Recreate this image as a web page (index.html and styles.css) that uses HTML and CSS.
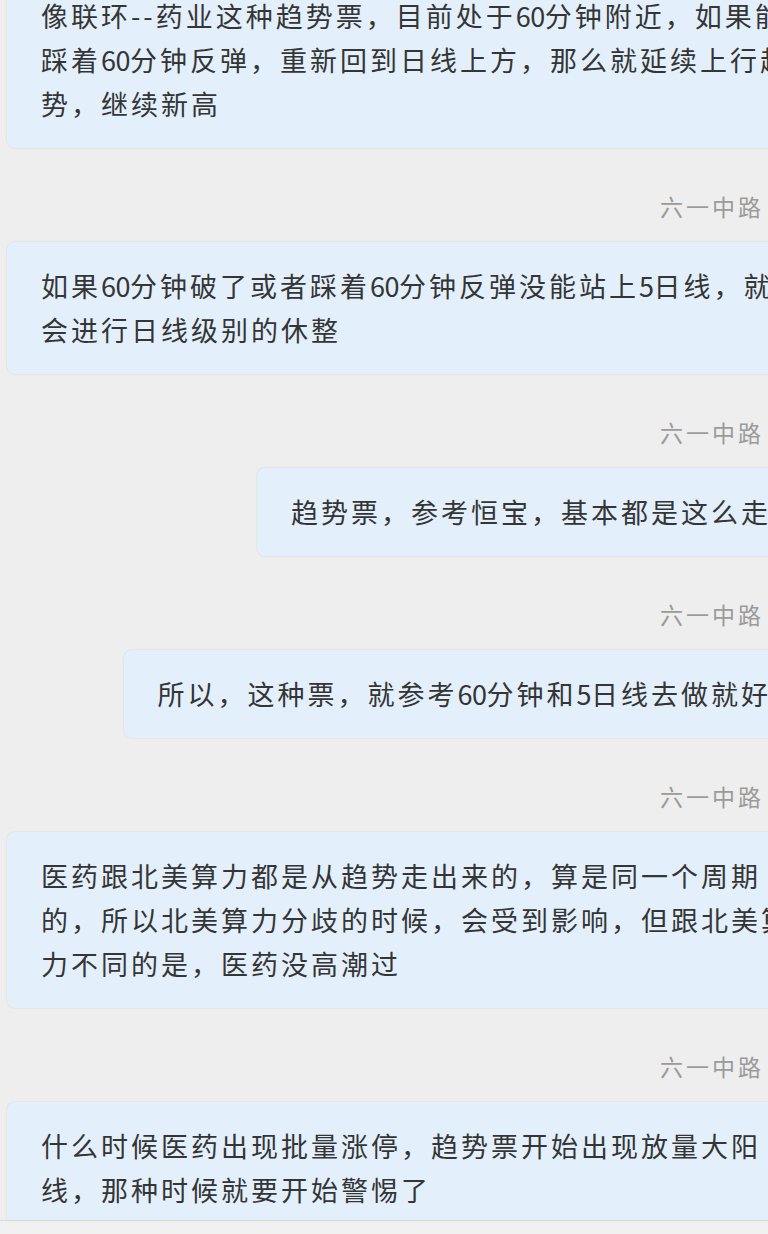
FILE: index.html
```html
<!DOCTYPE html>
<html lang="zh-CN">
<head>
<meta charset="utf-8">
<title>聊天记录</title>
<link rel="stylesheet" href="styles.css">
</head>
<body>
<main class="chat">
  <div class="list">
    <div class="bubble full">像联环--药业这种趋势票，目前处于<span class="num">60</span>分钟附近，如果能<br>踩着<span class="num">60</span>分钟反弹，重新回到日线上方，那么就延续上行趋<br>势，继续新高</div>

    <div class="sender"><span class="name">六一中路</span><span class="tag"></span></div>
    <div class="bubble full">如果<span class="num">60</span>分钟破了或者踩着<span class="num">60</span>分钟反弹没能站上<span class="num">5</span>日线，就<br>会进行日线级别的休整</div>

    <div class="sender"><span class="name">六一中路</span><span class="tag"></span></div>
    <div class="bubble">趋势票，参考恒宝，基本都是这么走的</div>

    <div class="sender"><span class="name">六一中路</span><span class="tag"></span></div>
    <div class="bubble">所以，这种票，就参考<span class="num">60</span>分钟和<span class="num">5</span>日线去做就好了</div>

    <div class="sender"><span class="name">六一中路</span><span class="tag"></span></div>
    <div class="bubble full">医药跟北美算力都是从趋势走出来的，算是同一个周期<br>的，所以北美算力分歧的时候，会受到影响，但跟北美算<br>力不同的是，医药没高潮过</div>

    <div class="sender"><span class="name">六一中路</span><span class="tag"></span></div>
    <div class="bubble full">什么时候医药出现批量涨停，趋势票开始出现放量大阳<br>线，那种时候就要开始警惕了</div>
  </div>
</main>
<footer class="footer"></footer>
</body>
</html>
```
FILE: styles.css
```css
html, body {
  margin: 0;
  padding: 0;
}

body {
  width: 768px;
  height: 1234px;
  overflow: hidden;
  background: #eeeeee;
  display: flex;
  flex-direction: column;
  font-family: "Noto Sans CJK SC", "Noto Sans", sans-serif;
  color: #333333;
}

.chat {
  flex: 1;
  min-height: 0;
  overflow: hidden;
  padding-left: 7px;
}

.list {
  width: 828px;
  margin-top: -28px;
  display: flex;
  flex-direction: column;
}

.bubble {
  align-self: flex-end;
  box-sizing: border-box;
  padding: 22px 34px;
  background: #e3f0fb;
  border-radius: 8px;
  box-shadow: 0 0 2px rgba(0, 0, 0, 0.12);
  font-size: 27px;
  line-height: 44px;
  letter-spacing: 3px;
  white-space: nowrap;
  color: #353535;
}

.bubble.full {
  align-self: stretch;
}

.num {
  letter-spacing: -0.5px;
}

.sender {
  display: flex;
  justify-content: flex-end;
  align-items: center;
  height: 36px;
  margin: 40px 0 18px;
  padding-right: 46px;
}

.name {
  font-size: 23px;
  line-height: 36px;
  letter-spacing: 3px;
  color: #9b9b9b;
}

.tag {
  width: 20px;
  height: 22px;
  margin-left: 5px;
  border-radius: 3px;
  background: #f9dcbc;
}

.footer {
  flex: 0 0 13px;
  border-top: 1px solid #dadada;
  background: #f0f0f0;
}
```
